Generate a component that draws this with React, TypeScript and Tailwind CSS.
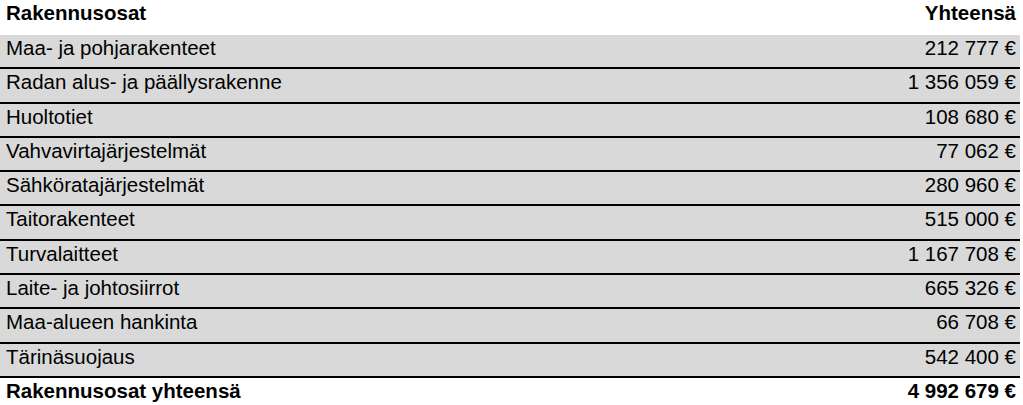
import React from "react";

const rows: [string, string][] = [
  ["Maa- ja pohjarakenteet", "212 777 €"],
  ["Radan alus- ja päällysrakenne", "1 356 059 €"],
  ["Huoltotiet", "108 680 €"],
  ["Vahvavirtajärjestelmät", "77 062 €"],
  ["Sähköratajärjestelmät", "280 960 €"],
  ["Taitorakenteet", "515 000 €"],
  ["Turvalaitteet", "1 167 708 €"],
  ["Laite- ja johtosiirrot", "665 326 €"],
  ["Maa-alueen hankinta", "66 708 €"],
  ["Tärinäsuojaus", "542 400 €"],
];

export default function App() {
  return (
    <div
      className="w-[1023px] h-[405px] bg-white text-black overflow-hidden"
      style={{ fontFamily: '"Liberation Sans", Arial, sans-serif' }}
    >
      <div className="w-[1020px] text-[20.5px] leading-[23.5px]">
        <div className="flex justify-between h-[35px] pl-[6px] pr-[4px] pt-px font-bold">
          <span>Rakennusosat</span>
          <span>Yhteensä</span>
        </div>
        {rows.map(([name, value]) => (
          <div
            key={name}
            className="flex justify-between h-[34.3px] box-border border-b-[2.4px] border-black bg-[#d9d9d9] pl-[6px] pr-[4px] pt-px"
          >
            <span>{name}</span>
            <span>{value}</span>
          </div>
        ))}
        <div className="flex justify-between pl-[6px] pr-[4px] pt-[1px] font-bold">
          <span>Rakennusosat yhteensä</span>
          <span>4 992 679 €</span>
        </div>
      </div>
    </div>
  );
}
